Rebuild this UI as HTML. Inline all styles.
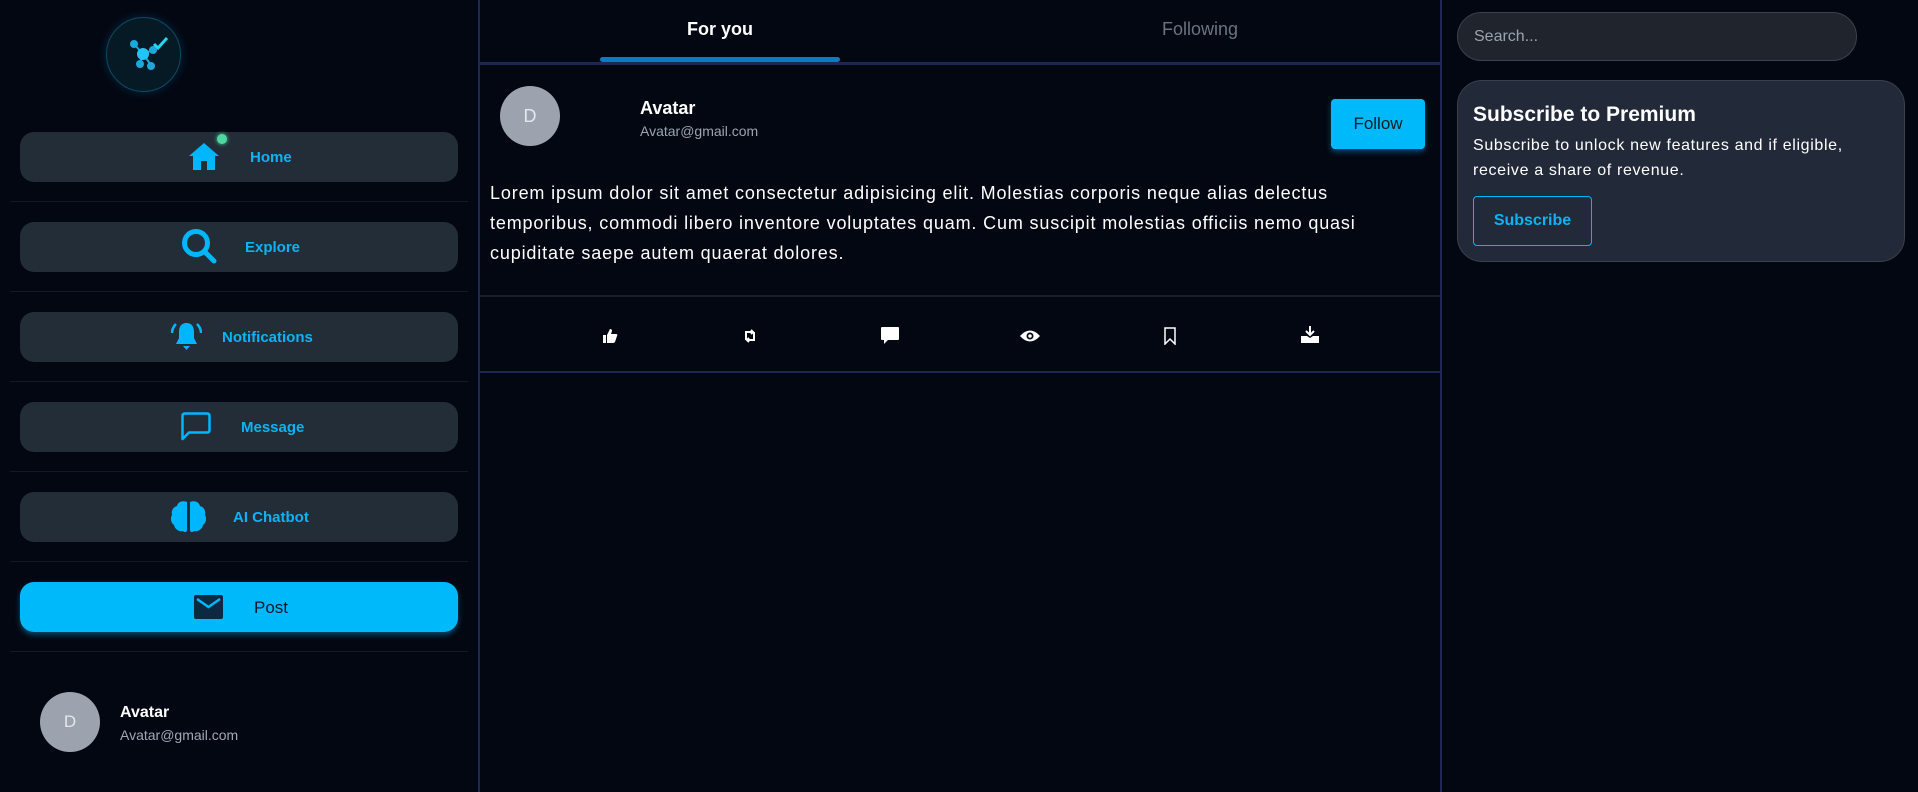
<!DOCTYPE html>
<html><head><meta charset="utf-8">
<style>
*{margin:0;padding:0;box-sizing:border-box}
body{width:1918px;height:792px;background:#030712;font-family:"Liberation Sans",sans-serif;position:relative;overflow:hidden;color:#fff}
.abs{position:absolute}
.vline{position:absolute;top:0;width:2px;height:792px;background:#1e2756}
.btn{position:absolute;left:20px;width:438px;height:50px;border-radius:14px;background:#222d38}
.sep{position:absolute;left:10px;width:458px;height:1px;background:#111a25}
.lbl{position:absolute;font-size:15px;font-weight:bold;color:#0db4f5;line-height:18px}
.ic{position:absolute}
</style></head><body>
<div class="vline" style="left:478px"></div>
<div class="vline" style="left:1440px"></div>

<!-- logo -->
<div class="abs" style="left:106px;top:17px;width:75px;height:75px;border-radius:50%;background:#061a26;border:1px solid #0b4a5e;box-shadow:0 0 10px rgba(0,180,255,0.2)"></div>
<svg class="ic" style="left:125px;top:35px" width="45" height="40" viewBox="0 0 45 40">
<g stroke="#1aa8dd" stroke-width="2"><line x1="9" y1="9" x2="18" y2="19"/><line x1="18" y1="19" x2="28" y2="15"/><line x1="18" y1="19" x2="15" y2="28"/><line x1="18" y1="19" x2="26" y2="30"/></g>
<circle cx="9" cy="9" r="4" fill="#1aa8dd"/><circle cx="18" cy="19" r="6" fill="#22c4f5"/><circle cx="28" cy="15" r="4" fill="#1aa8dd"/><circle cx="15" cy="29" r="4" fill="#1aa8dd"/><circle cx="26" cy="31" r="4" fill="#1aa8dd"/>
<path d="M29 9 L33 13 L42 3" stroke="#1fd8f0" stroke-width="3" fill="none"/>
</svg>

<!-- nav -->
<div class="btn" style="top:132px"></div>
<svg class="ic" style="left:189px;top:143px" width="30" height="27" viewBox="0 0 30 27"><path d="M15 0 L30 13 L26 13 L26 27 L18 27 L18 18 L12 18 L12 27 L4 27 L4 13 L0 13 Z" fill="#00b7ff"/></svg>
<div class="abs" style="left:217px;top:134px;width:10px;height:10px;border-radius:50%;background:#4ed8a0;box-shadow:0 0 4px #4ed8a0"></div>
<div class="lbl" style="left:250px;top:149px">Home</div>
<div class="sep" style="top:201px"></div>

<div class="btn" style="top:222px"></div>
<svg class="ic" style="left:181px;top:228px" width="38" height="38" viewBox="0 0 38 38"><circle cx="15" cy="15" r="11.5" stroke="#00b7ff" stroke-width="5" fill="none"/><line x1="24" y1="24" x2="33" y2="33" stroke="#00b7ff" stroke-width="5" stroke-linecap="round"/></svg>
<div class="lbl" style="left:245px;top:239px">Explore</div>
<div class="sep" style="top:291px"></div>

<div class="btn" style="top:312px"></div>
<svg class="ic" style="left:171px;top:321px" width="31" height="31" viewBox="0 0 31 31"><path d="M15.5 2 C10 2 8 6 8 11 L8 17 L5 23 L26 23 L23 17 L23 11 C23 6 21 2 15.5 2Z" fill="#00b7ff"/><path d="M12 25 L19 25 L15.5 29Z" fill="#00b7ff"/><path d="M5 3 C2 6 1 9 1 12 M26 3 C29 6 30 9 30 12" stroke="#00b7ff" stroke-width="2.5" fill="none"/></svg>
<div class="lbl" style="left:222px;top:329px">Notifications</div>
<div class="sep" style="top:381px"></div>

<div class="btn" style="top:402px"></div>
<svg class="ic" style="left:180px;top:411px" width="32" height="31" viewBox="0 0 32 31"><path d="M2.5 28 L2.5 5 Q2.5 2.5 5 2.5 L27 2.5 Q29.5 2.5 29.5 5 L29.5 19 Q29.5 21.5 27 21.5 L9 21.5 Z" stroke="#00b7ff" stroke-width="2.5" fill="none" stroke-linejoin="round"/></svg>
<div class="lbl" style="left:241px;top:419px">Message</div>
<div class="sep" style="top:471px"></div>

<div class="btn" style="top:492px"></div>
<svg class="ic" style="left:170px;top:500px" width="37" height="33" viewBox="0 0 37 33"><path d="M17 2 C12 0 8 2 7 6 C3 7 1 11 2 15 C0 18 1 23 4 25 C5 30 10 32 13 31 C15 33 17 32 17 30Z M20 2 C25 0 29 2 30 6 C34 7 36 11 35 15 C37 18 36 23 33 25 C32 30 27 32 24 31 C22 33 20 32 20 30Z" fill="#00b7ff"/></svg>
<div class="lbl" style="left:233px;top:509px">AI Chatbot</div>
<div class="sep" style="top:561px"></div>

<div class="btn" style="top:582px;background:#00b9fa;box-shadow:0 3px 6px rgba(0,140,200,0.5)"></div>
<svg class="ic" style="left:194px;top:595px" width="29" height="24" viewBox="0 0 29 24"><rect x="0" y="0" width="29" height="24" rx="2" fill="#0b2a42"/><path d="M3 4 L14.5 12 L26 4" stroke="#00b9fa" stroke-width="2.5" fill="none"/></svg>
<div class="abs" style="left:254px;top:598px;font-size:17px;color:#0b1a2a;line-height:20px">Post</div>
<div class="sep" style="top:651px"></div>

<div class="abs" style="left:40px;top:692px;width:60px;height:60px;border-radius:50%;background:#9ca3af;color:#e5e7eb;font-size:17px;line-height:60px;text-align:center">D</div>
<div class="abs" style="left:120px;top:704px;font-size:16px;font-weight:bold;line-height:18px">Avatar</div>
<div class="abs" style="left:120px;top:727px;font-size:14px;color:#a0a8b5;line-height:17px">Avatar@gmail.com</div>

<!-- center -->
<div class="abs" style="left:480px;top:62px;width:960px;height:3px;background:#1e2756"></div>
<div class="abs" style="left:600px;top:57px;width:240px;height:5px;border-radius:3px;background:#0a7bc4"></div>
<div class="abs" style="left:620px;top:18px;width:200px;text-align:center;font-size:18px;font-weight:bold;line-height:22px">For you</div>
<div class="abs" style="left:1100px;top:18px;width:200px;text-align:center;font-size:18px;color:#6b7280;line-height:22px">Following</div>

<div class="abs" style="left:500px;top:86px;width:60px;height:60px;border-radius:50%;background:#9ca3af;color:#e5e7eb;font-size:18px;line-height:60px;text-align:center">D</div>
<div class="abs" style="left:640px;top:97px;font-size:18px;font-weight:bold;line-height:22px">Avatar</div>
<div class="abs" style="left:640px;top:123px;font-size:14px;color:#9ca3af;line-height:17px">Avatar@gmail.com</div>
<div class="abs" style="left:1331px;top:99px;width:94px;height:50px;border-radius:4px;background:#00b9fa;box-shadow:0 3px 6px rgba(0,140,200,0.5);color:#0b1a2a;font-size:17px;line-height:50px;text-align:center">Follow</div>
<div class="abs" style="left:490px;top:178px;font-size:18px;letter-spacing:0.85px;line-height:30px;color:#fff;white-space:nowrap">Lorem ipsum dolor sit amet consectetur adipisicing elit. Molestias corporis neque alias delectus<br>temporibus, commodi libero inventore voluptates quam. Cum suscipit molestias officiis nemo quasi<br>cupiditate saepe autem quaerat dolores.</div>
<div class="abs" style="left:480px;top:295px;width:960px;height:2px;background:#1a1f2e"></div>

<svg class="ic" style="left:602px;top:328px" width="16" height="16" viewBox="0 0 16 16"><path d="M1 7 H4 V15 H1Z M5 7 L8 1 Q10 1 10 3 L9 6 H14 Q16 6 15 8 L13 14 Q12 15 11 15 H5Z" fill="#fff"/></svg>
<svg class="ic" style="left:743px;top:329px" width="14" height="14" viewBox="0 0 14 14"><path d="M3 11 V3 H10 M8 1 L10 3 L8 5 M11 3 V11 H4 M6 9 L4 11 L6 13" stroke="#fff" stroke-width="2" fill="none"/></svg>
<svg class="ic" style="left:880px;top:326px" width="20" height="20" viewBox="0 0 20 20"><path d="M2 1 H18 Q19 1 19 2 V13 Q19 14 18 14 H8 L4 18 V14 H2 Q1 14 1 13 V2 Q1 1 2 1Z" fill="#fff"/></svg>
<svg class="ic" style="left:1020px;top:329px" width="20" height="14" viewBox="0 0 20 14"><path d="M0 7 Q10 -4 20 7 Q10 18 0 7Z" fill="#fff"/><circle cx="10" cy="7" r="3.5" fill="#030712"/><circle cx="10" cy="7" r="1.8" fill="#fff"/></svg>
<svg class="ic" style="left:1164px;top:327px" width="12" height="18" viewBox="0 0 12 18"><path d="M1 1 H11 V17 L6 12 L1 17Z" stroke="#fff" stroke-width="1.5" fill="none"/></svg>
<svg class="ic" style="left:1301px;top:326px" width="18" height="18" viewBox="0 0 18 18"><path d="M9 0 V8 M5 5 L9 9 L13 5" stroke="#fff" stroke-width="2" fill="none"/><path d="M0 10 H6 L9 12 L12 10 H18 V17 H0Z" fill="#fff"/></svg>
<div class="abs" style="left:480px;top:371px;width:960px;height:2px;background:#1e2756"></div>

<!-- right -->
<div class="abs" style="left:1457px;top:12px;width:400px;height:49px;border-radius:25px;background:#1f242d;border:1px solid #3a414c;font-size:16px;color:#9ca3af;line-height:47px;padding-left:16px">Search...</div>
<div class="abs" style="left:1457px;top:80px;width:448px;height:182px;border-radius:25px;background:#222938;border:1px solid #3a414c"></div>
<div class="abs" style="left:1473px;top:102px;font-size:21px;font-weight:bold;line-height:26px">Subscribe to Premium</div>
<div class="abs" style="left:1473px;top:133px;font-size:16px;letter-spacing:0.65px;line-height:25px;white-space:nowrap">Subscribe to unlock new features and if eligible,<br>receive a share of revenue.</div>
<div class="abs" style="left:1473px;top:196px;width:119px;height:50px;border:1px solid #00b7ff;border-radius:4px;color:#0db4f5;font-weight:bold;font-size:16px;line-height:48px;text-align:center">Subscribe</div>
</body></html>
